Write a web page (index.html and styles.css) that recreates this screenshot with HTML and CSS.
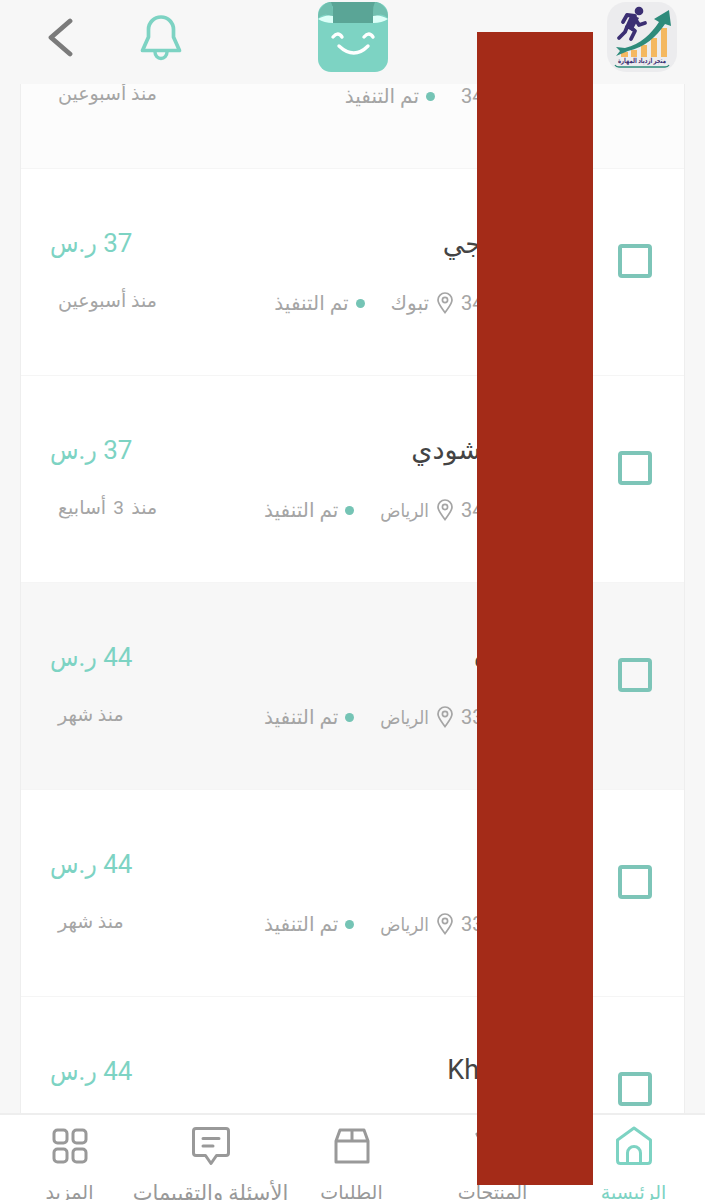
FILE: index.html
```html
<!DOCTYPE html>
<html lang="ar" dir="rtl">
<head>
    <meta charset="UTF-8">
    <meta name="viewport" content="width=device-width, initial-scale=1.0">
    <title>الطلبات</title>
    <link rel="stylesheet" href="styles.css">
</head>
<body>
    <div class="app">
        <header class="header">
            <!-- store logo -->
            <svg class="store-logo" viewBox="0 0 70 70">
                <rect width="70" height="70" rx="19" fill="#ececee"/>
                <path d="M14 50h7v5h-7zM24 48h6v7h-6zM34 43h6v12h-6zM44 36h6v19h-6zM54 26h6v29h-6z" fill="#f4b860"/>
                <path d="M9 45l9 1C34 42 44 32 52 20l-5-3 15-9 2 16-6-2C49 35 38 45 21 49l-12 5 4-5z" fill="#2e8b7b"/>
                <circle cx="32" cy="9" r="4.3" fill="#3b2f73"/>
                <path d="M16 20l4-7 8 1M29 18l3 5 6-2M22 24l6 5-4 8M20 25l-2 5-6 6" fill="none" stroke="#3b2f73" stroke-width="3.800" stroke-linecap="round" stroke-linejoin="round"/>
                <path d="M24 12l8 4-7 13-7-4z" fill="#3b2f73"/>
                <text class="logo-text" x="35" y="61" text-anchor="middle" textLength="48" lengthAdjust="spacingAndGlyphs">متجر ازدياد المهارة</text>
                <path d="M8 63q1 2 4 2h46q3 0 4-2" fill="none" stroke="#2e8b7b" stroke-width="1.3"/>
            </svg>
            <!-- smiling bag -->
            <svg class="brand" viewBox="0 0 70 70">
                <rect width="70" height="70" rx="13" fill="#7dd3c3"/>
                <path d="M11 0h48l-3 5v16H15V5z" fill="#5aa596"/>
                <path d="M3 6C6 2 9 0 13 0q2 4 2 10v6Q8 9 0 16q0-7 3-10zM67 6c-3-4-6-6-10-6q-2 4-2 10v6q8-7 15 0 0-7-3-10z" fill="#70bfaf"/>
                <path d="M0 17q8-5 15-3v7q-9 0-15-4zM70 17q-8-5-15-3v7q9 0 15-4z" fill="#dcfff8"/>
                <path d="M15 35q5-6 9 0M46 35q5-6 9 0M21 44q15 14 29 0" fill="none" stroke="#fff" stroke-width="3.4" stroke-linecap="round"/>
            </svg>
            <svg class="bell" viewBox="0 0 42 48">
                <path d="M8.500 23V15.500a12.500 12.500 0 0 1 25 0V23l6 13.500h-37z" fill="none" stroke="#7dd3c3" stroke-width="3.700" stroke-linejoin="round"/>
                <path d="M15 38a6 6.500 0 0 0 12 0" fill="none" stroke="#7dd3c3" stroke-width="3.400"/>
            </svg>
            <svg class="back" viewBox="0 0 26 40">
                <path d="M22 3L3 19.500 22 36" fill="none" stroke="#7b7b7b" stroke-width="4.800" stroke-linecap="round" stroke-linejoin="round"/>
            </svg>
        </header>

        <main class="orders">
            <div class="order order-muted">
                <span class="checkbox"></span>
                <div class="info">
                    <div class="name"></div>
                    <div class="meta">
                        <span class="number">34</span>
                        <span class="status">تم التنفيذ</span>
                    </div>
                </div>
                <div class="total">
                    <div class="date">منذ أسبوعين</div>
                </div>
            </div>
            <div class="order">
                <span class="checkbox"></span>
                <div class="info">
                    <div class="name name-a">جي</div>
                    <div class="meta">
                        <span class="number">34</span>
                        <svg class="pin" viewBox="0 0 16 22"><path d="M8 20.500C5 16 1 12 1 8a7 7 0 0 1 14 0c0 4-4 8-7 12.500z"/><circle cx="8" cy="8" r="2.600"/></svg>
                        <span class="city">تبوك</span>
                        <span class="status">تم التنفيذ</span>
                    </div>
                </div>
                <div class="total">
                    <div class="price">37 ر.س</div>
                    <div class="date">منذ أسبوعين</div>
                </div>
            </div>
            <div class="order">
                <span class="checkbox"></span>
                <div class="info">
                    <div class="name name-b">شودي</div>
                    <div class="meta">
                        <span class="number">34</span>
                        <svg class="pin" viewBox="0 0 16 22"><path d="M8 20.500C5 16 1 12 1 8a7 7 0 0 1 14 0c0 4-4 8-7 12.500z"/><circle cx="8" cy="8" r="2.600"/></svg>
                        <span class="city city-long">الرياض</span>
                        <span class="status">تم التنفيذ</span>
                    </div>
                </div>
                <div class="total">
                    <div class="price">37 ر.س</div>
                    <div class="date date-count">منذ 3 أسابيع</div>
                </div>
            </div>
            <div class="order order-gray">
                <span class="checkbox"></span>
                <div class="info">
                    <div class="name name-c">ه</div>
                    <div class="meta">
                        <span class="number">33</span>
                        <svg class="pin" viewBox="0 0 16 22"><path d="M8 20.500C5 16 1 12 1 8a7 7 0 0 1 14 0c0 4-4 8-7 12.500z"/><circle cx="8" cy="8" r="2.600"/></svg>
                        <span class="city city-long">الرياض</span>
                        <span class="status">تم التنفيذ</span>
                    </div>
                </div>
                <div class="total">
                    <div class="price">44 ر.س</div>
                    <div class="date">منذ شهر</div>
                </div>
            </div>
            <div class="order">
                <span class="checkbox"></span>
                <div class="info">
                    <div class="name"></div>
                    <div class="meta">
                        <span class="number">33</span>
                        <svg class="pin" viewBox="0 0 16 22"><path d="M8 20.500C5 16 1 12 1 8a7 7 0 0 1 14 0c0 4-4 8-7 12.500z"/><circle cx="8" cy="8" r="2.600"/></svg>
                        <span class="city city-long">الرياض</span>
                        <span class="status">تم التنفيذ</span>
                    </div>
                </div>
                <div class="total">
                    <div class="price">44 ر.س</div>
                    <div class="date">منذ شهر</div>
                </div>
            </div>
            <div class="order">
                <span class="checkbox"></span>
                <div class="info">
                    <div class="name name-d">Kh</div>
                </div>
                <div class="total">
                    <div class="price">44 ر.س</div>
                </div>
            </div>
        </main>

        <nav class="tabs">
            <a class="tab tab-active">
                <svg viewBox="0 0 40 40"><path d="M20 2L36.500 14v20.500q0 3-3 3h-27q-3 0-3-3V14zM13.500 37V27a6.500 6.500 0 0 1 13 0v10"/></svg>
                <span class="label">الرئيسية</span>
            </a>
            <a class="tab">
                <svg viewBox="0 0 40 40"><path d="M4 8l8-4h17l7 4-3 6H7z"/></svg>
                <span class="label">المنتجات</span>
            </a>
            <a class="tab">
                <svg viewBox="0 0 40 40"><path d="M4 15L8 4h24l4 11v21H4zM4 15h32M20 4v11"/></svg>
                <span class="label">الطلبات</span>
            </a>
            <a class="tab">
                <svg viewBox="0 0 40 40"><path d="M5 2.500h30q2.500 0 2.500 2.500v22q0 2.500-2.500 2.500h-9.500L20 37.500l-5.500-8H5q-2.500 0-2.500-2.500V5q0-2.500 2.500-2.500zM12 12.500h16M12 20h10"/></svg>
                <span class="label label-long">الأسئلة والتقييمات</span>
            </a>
            <a class="tab">
                <svg viewBox="0 0 40 40"><rect x="4" y="4" width="13" height="13" rx="3.500"/><rect x="23" y="4" width="13" height="13" rx="3.500"/><rect x="4" y="23" width="13" height="13" rx="3.500"/><rect x="23" y="23" width="13" height="13" rx="3.500"/></svg>
                <span class="label">المزيد</span>
            </a>
        </nav>

        <div class="cover"></div>
    </div>
</body>
</html>
```
FILE: styles.css
```css
* {
    box-sizing: border-box;
}

body {
    margin: 0;
    font-family: Roboto, "DejaVu Sans", sans-serif;
    background-color: #f7f7f7;
    color: #a5a5a5;
}

.app {
    position: relative;
    display: flex;
    flex-direction: column;
    height: 1200px;
    overflow: hidden;
}

.header {
    display: flex;
    align-items: flex-start;
    height: 84px;
    flex-shrink: 0;
}

.store-logo {
    width: 70px;
    height: 70px;
    margin: 2px 28px 0 0;
}

.logo-text {
    font-size: 7px;
    font-weight: bold;
    fill: #3b2f73;
}

.brand {
    width: 70px;
    height: 70px;
    margin: 2px 219px 0 0;
}

.bell {
    width: 42px;
    height: 48px;
    margin: 14px 136px 0 0;
}

.back {
    width: 26px;
    height: 40px;
    margin: 18px 66px 0 0;
}

.orders {
    flex: 1;
    min-height: 0;
    margin: 0 20px;
    background-color: #fff;
    border: solid #eee;
    border-width: 0 1px;
    overflow: hidden;
}

.order {
    display: flex;
    height: 207px;
    padding: 0 32px 0 29px;
    border-bottom: 1px solid #f5f5f5;
}

/* list is scrolled, the first order shows only its lower part */
.order:first-child {
    margin-top: -122px;
}

.order-muted {
    background-color: #fcfcfc;
}

.order-muted .total {
    padding-top: 94px;
}

.order-gray {
    background-color: #f7f7f7;
}

.checkbox {
    width: 34px;
    height: 34px;
    margin-top: 75px;
    border: 4px solid #7dc5b8;
    border-radius: 4px;
}

.info {
    width: 400px;
    margin-right: 25px;
    padding-top: 53px;
    flex-shrink: 0;
}

.name {
    height: 40px;
    line-height: 40px;
    font-size: 27px;
    color: #444;
    white-space: nowrap;
}

.name-a {
    padding-right: 111px;
    line-height: 44px;
}

.name-b {
    padding-right: 112px;
    line-height: 42px;
}

.name-c {
    padding-right: 105px;
    line-height: 42px;
}

.name-d {
    padding-right: 114px;
}

.meta {
    display: flex;
    align-items: center;
    height: 30px;
    margin-top: 26px;
    font-size: 20px;
    white-space: nowrap;
}

.number {
    width: 132px;
    text-align: left;
}

.pin {
    width: 16px;
    height: 22px;
    margin: 0 8px;
    fill: none;
    stroke: #a5a5a5;
    stroke-width: 1.7;
}

.city-long {
    font-family: "DejaVu Sans Condensed", "DejaVu Sans", sans-serif;
    font-size: 18.5px;
}

.status {
    display: flex;
    align-items: center;
    margin-right: 26px;
}

.status::before {
    content: "";
    width: 9px;
    height: 9px;
    margin-left: 7px;
    border-radius: 50%;
    background-color: #75c4b5;
}

.total {
    flex: 1;
    padding-top: 54px;
    direction: ltr;
    white-space: nowrap;
}

.price {
    width: max-content;
    height: 40px;
    line-height: 40px;
    font-family: Roboto, "DejaVu Sans Condensed", "DejaVu Sans", sans-serif;
    font-size: 26px;
    color: #7dd3c3;
    direction: rtl;
}

.date {
    width: max-content;
    height: 28px;
    margin: 24px 0 0 8px;
    line-height: 28px;
    font-size: 19px;
    direction: rtl;
}

.date-count {
    word-spacing: 2.5px;
}

.tabs {
    display: grid;
    grid-template-columns: repeat(5, 141px);
    height: 87px;
    padding-right: 1px;
    flex-shrink: 0;
    background-color: #fff;
    border-top: 2px solid #eee;
}

.tab {
    display: flex;
    flex-direction: column;
    align-items: center;
    color: #999;
}

.tab svg {
    width: 40px;
    height: 40px;
    margin-top: 11px;
    fill: none;
    stroke: currentColor;
    stroke-width: 3;
    stroke-linejoin: round;
    stroke-linecap: round;
    flex-shrink: 0;
}

.tab-active {
    color: #7dd3c3;
}

.label {
    margin-top: 13px;
    line-height: 28px;
    font-size: 19px;
    white-space: nowrap;
}

.label-long {
    font-size: 21px;
}

/* hides the customer details */
.cover {
    position: absolute;
    top: 32px;
    left: 477px;
    width: 116px;
    height: 1153px;
    background-color: #a42b18;
}
```
